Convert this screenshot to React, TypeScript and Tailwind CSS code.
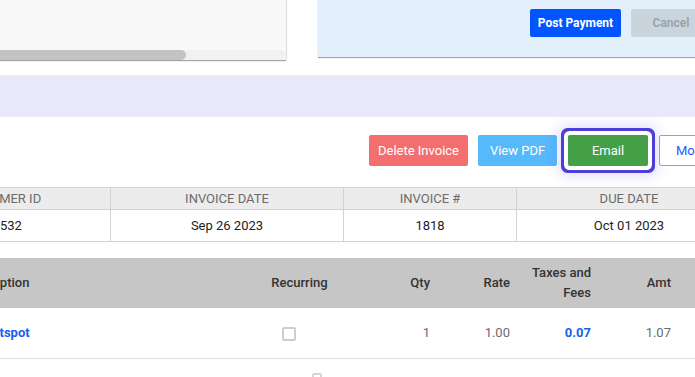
import React from "react";

export default function App() {
  return (
    <div className="w-[695px] h-[377px] overflow-hidden bg-white font-['Roboto',sans-serif] relative">
      {/* top cards */}
      <div className="flex items-start h-[61px]">
        <div className="w-[286px] h-[60px] shrink-0 bg-[#f8f8f8] flex flex-col shadow-[0_1px_1px_rgba(0,0,0,0.35),1px_0_1px_rgba(0,0,0,0.08)]">
          <div className="mt-auto h-[10px] bg-[#f1f1f1] rounded-r-[6px] flex">
            <div className="w-[186px] h-[10px] bg-[#c3c3c3] rounded-r-[6px]" />
          </div>
        </div>
        <div className="ml-[32px] w-[420px] shrink-0 h-[57px] bg-[#e3f0fc] flex items-start pt-[9px] shadow-[0_1px_1px_rgba(0,0,0,0.35)]">
          <button className="ml-[212px] w-[91px] h-[28px] bg-[#0055ff] text-white text-[12px] font-bold rounded-[2px] shrink-0">
            Post Payment
          </button>
          <button className="ml-[10px] w-[80px] h-[28px] bg-[#c9d4dd] text-[#9aa4ad] text-[12px] font-bold rounded-[2px] shrink-0">
            Cancel
          </button>
        </div>
      </div>

      {/* lavender band */}
      <div className="mt-[14px] h-[42px] bg-[#e8eaf9]" />

      {/* action buttons */}
      <div className="mt-[18px] h-[31px] flex items-stretch">
        <button className="ml-[369px] w-[99px] shrink-0 bg-[#f36e6e] text-white text-[13px] font-normal rounded-[2px]">
          Delete Invoice
        </button>
        <button className="ml-[10px] w-[79px] shrink-0 bg-[#56b9fc] text-white text-[13px] font-normal rounded-[2px]">
          View PDF
        </button>
        <button className="ml-[11px] w-[80px] shrink-0 bg-[#43a047] text-white text-[13px] font-normal rounded-[2px] shadow-[0_0_0_4px_#ffffff,0_0_0_7px_#4c3fd8,0_0_14px_9px_rgba(100,80,235,0.22)]">
          Email
        </button>
        <button className="ml-[11px] w-[80px] shrink-0 bg-white border border-[#7d9dff] text-[#1f5cff] text-[13px] font-normal rounded-[2px] text-left pl-[16px]">
          More
        </button>
      </div>

      {/* invoice info table */}
      <div className="mt-[21px] w-[760px] border-y border-[#d2d2d2] text-[13px]">
        <div className="flex h-[22px] bg-[#ececec] text-[#6b6b6b] border-b border-[#d2d2d2]">
          <div className="w-[110px] shrink-0 overflow-hidden whitespace-nowrap flex items-center">
            <span className="ml-[-42px]">CUSTOMER ID</span>
          </div>
          <div className="w-[233px] shrink-0 border-l border-[#d2d2d2] flex items-center justify-center">INVOICE DATE</div>
          <div className="w-[173px] shrink-0 border-l border-[#d2d2d2] flex items-center justify-center">INVOICE #</div>
          <div className="w-[225px] shrink-0 border-l border-[#d2d2d2] flex items-center justify-center">DUE DATE</div>
        </div>
        <div className="flex h-[31px] text-[#222222]">
          <div className="w-[110px] shrink-0 overflow-hidden whitespace-nowrap flex items-center">532</div>
          <div className="w-[233px] shrink-0 border-l border-[#d2d2d2] flex items-center justify-center">Sep 26 2023</div>
          <div className="w-[173px] shrink-0 border-l border-[#d2d2d2] flex items-center justify-center">1818</div>
          <div className="w-[225px] shrink-0 border-l border-[#d2d2d2] flex items-center justify-center">Oct 01 2023</div>
        </div>
      </div>

      {/* line items table */}
      <div className="mt-[16px] w-[760px] text-[13px]">
        <div className="flex h-[50px] bg-[#c6c6c6] text-[#333333] font-medium">
          <div className="w-[239px] shrink-0 overflow-hidden whitespace-nowrap flex items-center">
            <span className="ml-[-37px]">Description</span>
          </div>
          <div className="w-[100px] shrink-0 flex items-center justify-center pl-[21px]">Recurring</div>
          <div className="w-[101px] shrink-0 flex items-center justify-end pr-[10px]">Qty</div>
          <div className="w-[80px] shrink-0 flex items-center justify-end pr-[10px]">Rate</div>
          <div className="w-[81px] shrink-0 flex items-center justify-end pr-[10px] text-right leading-[20px]">Taxes and Fees</div>
          <div className="w-[80px] shrink-0 flex items-center justify-end pr-[10px]">Amt</div>
        </div>
        <div className="flex h-[51px] border-b border-[#e0e0e0] text-[#6b6b6b]">
          <div className="w-[239px] shrink-0 overflow-hidden whitespace-nowrap flex items-center">
            <span className="ml-[-17px] text-[#1a5ef0] font-bold">Hotspot</span>
          </div>
          <div className="w-[100px] shrink-0 flex items-center justify-center pt-[2px]">
            <span className="w-[14px] h-[14px] border-2 border-[#cdcdcd] rounded-[2px] bg-white" />
          </div>
          <div className="w-[101px] shrink-0 flex items-center justify-end pr-[10px]">1</div>
          <div className="w-[80px] shrink-0 flex items-center justify-end pr-[10px]">1.00</div>
          <div className="w-[81px] shrink-0 flex items-center justify-end pr-[10px] text-[#1a5ef0] font-bold">0.07</div>
          <div className="w-[80px] shrink-0 flex items-center justify-end pr-[10px]">1.07</div>
        </div>
        <div className="flex h-[40px]">
          <div className="w-[312px] shrink-0" />
          <div className="mt-[14px] w-[10px] h-[10px] border-2 border-[#d4d4d4] rounded-[2px]" />
        </div>
      </div>
    </div>
  );
}
